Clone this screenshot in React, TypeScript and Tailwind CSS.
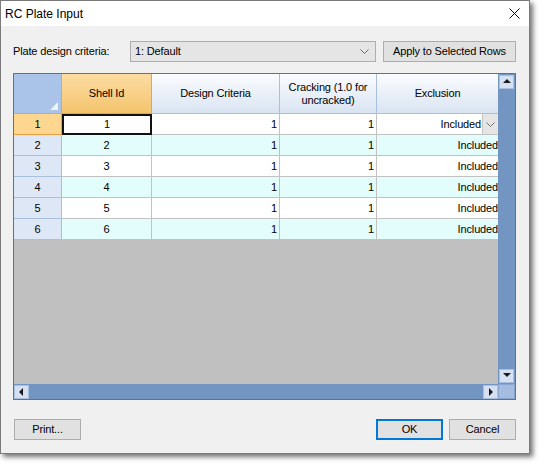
import React from "react";

const rows = [1, 2, 3, 4, 5, 6];

function Chevron({ className }: { className?: string }) {
  return (
    <svg width="9" height="5" viewBox="0 0 9 5" className={className}>
      <polyline points="0.5,0.5 4.5,4.5 8.5,0.5" fill="none" stroke="currentColor" strokeWidth="1" />
    </svg>
  );
}

function Arrow({ dir }: { dir: "up" | "down" | "left" | "right" }) {
  const pts = {
    up: "1,6 5,2 9,6",
    down: "1,2 5,6 9,2",
    left: "6,1 2,5 6,9",
    right: "3,1 7,5 3,9",
  }[dir];
  return (
    <svg width="10" height="10" viewBox="0 0 10 10">
      <polygon points={pts} fill="#1a1a1a" />
    </svg>
  );
}

function ScrollButton({ dir }: { dir: "up" | "down" | "left" | "right" }) {
  return (
    <div className="w-[15px] h-[14px] bg-[#d5e1f2] border border-[#a9bfdd] flex items-center justify-center">
      <Arrow dir={dir} />
    </div>
  );
}

export default function App() {
  return (
    <div
      className="w-[545px] h-[469px] bg-white text-black"
      style={{ fontFamily: '"Liberation Sans", Arial, sans-serif' }}
    >
      <div className="w-[530px] h-[454px] border border-[#7a7a7a] bg-[#f0f0f0] flex flex-col shadow-[3px_3px_5px_rgba(0,0,0,0.55)]">
        {/* Title bar */}
        <div className="h-[25px] bg-white flex items-center justify-between pl-[4px] pr-[9px] shrink-0">
          <span className="text-[12px]">RC Plate Input</span>
          <svg width="11" height="11" viewBox="0 0 11 11">
            <line x1="0.5" y1="0.5" x2="10.5" y2="10.5" stroke="#111" strokeWidth="1" />
            <line x1="10.5" y1="0.5" x2="0.5" y2="10.5" stroke="#111" strokeWidth="1" />
          </svg>
        </div>

        <div className="flex-1 flex flex-col pl-[12px] pr-[13px] pt-[15px] text-[11px] tracking-[-0.15px]">
          {/* Criteria row */}
          <div className="flex items-center h-[21px]">
            <span className="w-[117px]">Plate design criteria:</span>
            <div className="w-[246px] h-[21px] bg-[#e5e5e5] border border-[#adadad] flex items-center justify-between pl-[4px] pr-[6px]">
              <span>1: Default</span>
              <Chevron className="text-[#6b6b6b]" />
            </div>
            <button className="ml-[7px] w-[133px] h-[21px] bg-[#e1e1e1] border border-[#adadad] flex items-center justify-center">
              Apply to Selected Rows
            </button>
          </div>

          {/* Grid */}
          <div className="mt-[11px] w-[503px] h-[327px] border border-[#6f6f6f] flex">
            <div className="w-[484px] flex flex-col">
              {/* Header */}
              <div className="flex h-[40px] shrink-0">
                <div className="w-[48px] bg-[#a9c4e8] border-r border-b border-[#9bb4d6] relative">
                  <svg width="8" height="8" viewBox="0 0 8 8" className="absolute right-[3px] bottom-[3px]">
                    <polygon points="8,0 8,8 0,8" fill="#eef3fb" />
                  </svg>
                </div>
                <div className="w-[90px] bg-gradient-to-b from-[#fcdca2] to-[#f4c46c] border-r border-b border-[#f0a048] flex items-center justify-center">
                  Shell Id
                </div>
                <div className="w-[128px] bg-gradient-to-b from-[#fbfcfe] to-[#d9e4f2] border-r border-b border-[#a9c0dc] flex items-center justify-center">
                  Design Criteria
                </div>
                <div className="w-[97px] bg-gradient-to-b from-[#fbfcfe] to-[#d9e4f2] border-r border-b border-[#a9c0dc] flex items-center justify-center text-center leading-[13px]">
                  Cracking (1.0 for
                  <br />
                  uncracked)
                </div>
                <div className="w-[121px] bg-gradient-to-b from-[#fbfcfe] to-[#d9e4f2] border-b border-[#a9c0dc] flex items-center justify-center">
                  Exclusion
                </div>
              </div>

              {/* Rows */}
              {rows.map((n) => {
                const bg = n % 2 === 0 ? "bg-[#e3fcfc]" : "bg-white";
                const selected = n === 1;
                return (
                  <div key={n} className="flex h-[21px] shrink-0">
                    <div
                      className={
                        selected
                          ? "w-[48px] bg-[#fdd68f] border-r border-b border-[#f29d3d] flex items-center justify-center"
                          : "w-[48px] bg-[#dde7f5] border-r border-b border-[#a9c0dc] flex items-center justify-center"
                      }
                    >
                      {n}
                    </div>
                    <div
                      className={
                        selected
                          ? "w-[90px] bg-white border-2 border-[#111] flex items-center justify-center"
                          : `w-[90px] ${bg} border-r border-b border-[#c2c2c2] flex items-center justify-center`
                      }
                    >
                      {n}
                    </div>
                    <div className={`w-[128px] ${bg} border-r border-b border-[#c2c2c2] flex items-center justify-end pr-[2px]`}>
                      1
                    </div>
                    <div className={`w-[97px] ${bg} border-r border-b border-[#c2c2c2] flex items-center justify-end pr-[2px]`}>
                      1
                    </div>
                    <div className={`w-[121px] ${bg} border-b border-[#c2c2c2] flex items-center justify-end`}>
                      {selected ? (
                        <>
                          <span className="mr-[1px]">Included</span>
                          <div className="w-[16px] h-[20px] bg-[#e5e5e5] border-l border-[#c8c8c8] flex items-center justify-center">
                            <Chevron className="text-[#707070]" />
                          </div>
                        </>
                      ) : (
                        <span>Included</span>
                      )}
                    </div>
                  </div>
                );
              })}

              <div className="flex-1 bg-[#c0c0c0]" />

              {/* Horizontal scrollbar */}
              <div className="h-[15px] bg-[#7395c1] flex items-center justify-between shrink-0">
                <ScrollButton dir="left" />
                <ScrollButton dir="right" />
              </div>
            </div>

            {/* Vertical scrollbar */}
            <div className="w-[17px] flex flex-col">
              <div className="flex-1 bg-[#7395c1] flex flex-col items-center justify-between py-[1px]">
                <ScrollButton dir="up" />
                <ScrollButton dir="down" />
              </div>
              <div className="h-[15px] bg-[#a3bce0] border border-[#8aa6cf] shrink-0" />
            </div>
          </div>

          {/* Bottom buttons */}
          <div className="mt-[19px] flex items-center">
            <button className="ml-[1px] w-[67px] h-[21px] bg-[#e1e1e1] border border-[#adadad] flex items-center justify-center">
              Print...
            </button>
            <button className="ml-auto w-[67px] h-[21px] bg-[#e1e1e1] border-2 border-[#0078d7] flex items-center justify-center">
              OK
            </button>
            <button className="ml-[6px] w-[67px] h-[21px] bg-[#e1e1e1] border border-[#adadad] flex items-center justify-center">
              Cancel
            </button>
          </div>
        </div>
      </div>
    </div>
  );
}
